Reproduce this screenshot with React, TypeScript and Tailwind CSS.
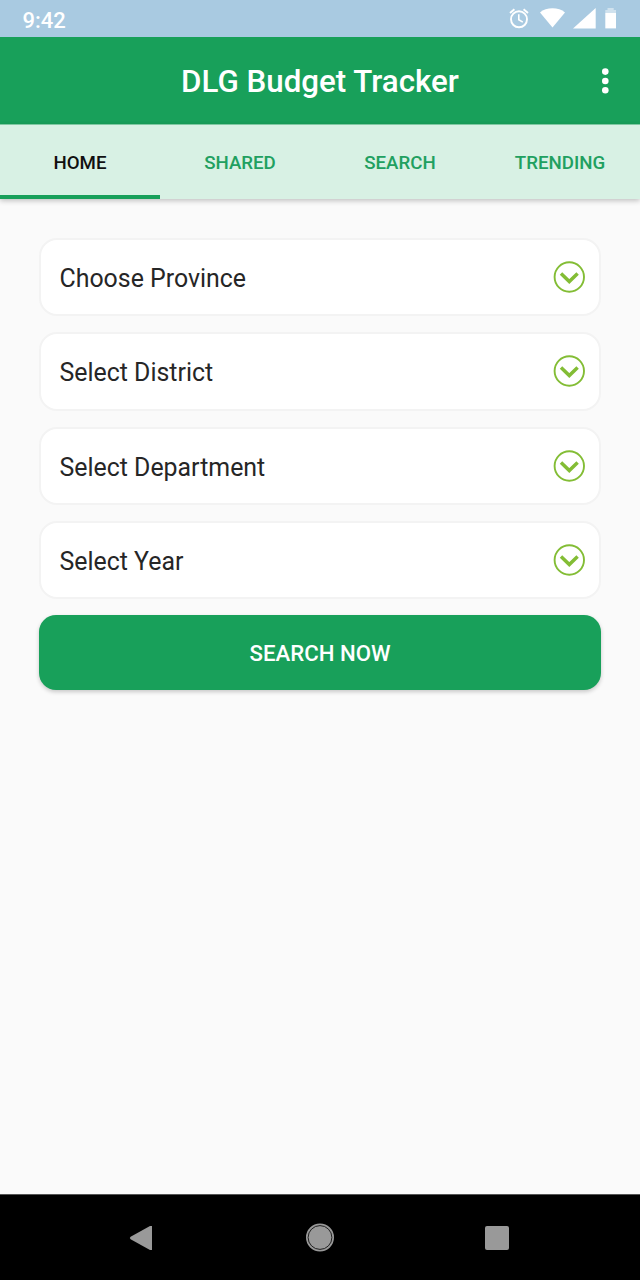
import React from "react";

const tabs = [
  { label: "HOME", active: true },
  { label: "SHARED", active: false },
  { label: "SEARCH", active: false },
  { label: "TRENDING", active: false },
];

const fields = ["Choose Province", "Select District", "Select Department", "Select Year"];

function StatusBar() {
  return (
    <div className="flex h-[37px] items-center justify-between bg-[#a9cae1] pr-[24px] pl-[22.500px] text-white">
      <span className="pt-[4px] text-[22px] leading-none font-medium">9:42</span>
      <svg width="110" height="24" viewBox="506 6 110 24" fill="currentColor" className="mb-[1px]">
        <g fill="none" stroke="currentColor" strokeWidth="1.9">
          <circle cx="519" cy="19.300" r="8" />
          <path d="M518.8 14.300v5.4l4 2.4" strokeWidth="1.6" />
          <path d="M510 12.900l4.4-3.7M528 12.900l-4.4-3.7" />
        </g>
        <path d="M540 12.4C543.2 9.8 547.7 8.3 552.5 8.3s9.300 1.500 12.500 4.100L552.500 27.600z" />
        <path d="M595.700 8v20.400h-22.700z" />
        <path d="M607.500 8h6.200v2h2.300v3h-10.700v-3h2.200z" opacity="0.45" />
        <path d="M605.300 13h10.700v15.400h-10.700z" />
      </svg>
    </div>
  );
}

function Header() {
  return (
    <header className="grid h-[87px] grid-cols-[70px_1fr_70px] items-center bg-[#18a05a] text-white">
      <span />
      <h1 className="pt-[2px] text-center text-[31.300px] leading-none font-medium whitespace-nowrap">
        DLG Budget Tracker
      </h1>
      <button className="flex justify-center" aria-label="More">
        <svg width="8" height="28" viewBox="0 0 8 28" fill="currentColor">
          <circle cx="4.300" cy="4.600" r="3.300" />
          <circle cx="4.300" cy="14" r="3.300" />
          <circle cx="4.300" cy="23.300" r="3.300" />
        </svg>
      </button>
    </header>
  );
}

function Chevron() {
  return (
    <svg width="32" height="32" viewBox="0 0 32 32" fill="none" stroke="#83bd35">
      <circle cx="16.300" cy="16" r="14.700" strokeWidth="1.900" />
      <path d="M8 12.500l8.300 8 8.300-8" strokeWidth="3.500" />
    </svg>
  );
}

export default function App() {
  return (
    <div className="flex h-[1280px] w-[640px] flex-col overflow-hidden bg-[#fafafa] font-['Roboto',sans-serif]">
      <StatusBar />
      <Header />
      <nav className="grid h-[75px] grid-cols-4 border-t border-[#7fc9a2] bg-[#d8f1e4] shadow-[0_2px_5px_rgba(0,0,0,0.22)]">
        {tabs.map((tab) => (
          <button
            key={tab.label}
            className={
              tab.active
                ? "border-b-[4px] border-[#18a05a] pt-[6px] text-[18.700px] font-medium text-[#101010]"
                : "border-b-[4px] border-transparent pt-[6px] text-[18.700px] font-medium text-[#21a060]"
            }
          >
            {tab.label}
          </button>
        ))}
      </nav>
      <main className="flex flex-1 flex-col gap-4 px-[39px] pt-[39px]">
        {fields.map((field) => (
          <button
            key={field}
            className="flex h-[78.250px] items-center justify-between rounded-[18px] border-2 border-[#f3f3f3] bg-white pr-[14px] pl-[18.500px] text-[24.900px] text-[#262626]"
          >
            <span className="pt-[3.500px]">{field}</span>
            <Chevron />
          </button>
        ))}
        <button className="h-[75px] rounded-[17px] bg-[#18a05a] pt-[2px] text-[22.200px] font-medium text-white shadow-[0_2px_4px_rgba(0,0,0,0.2)]">
          SEARCH NOW
        </button>
      </main>
      <footer className="grid h-[86px] grid-cols-[282px_76px_282px] items-center border-t border-[#555] bg-black">
        <svg width="24" height="26" viewBox="0 0 24 26" fill="#999" className="ml-[129px]">
          <path d="M23 1v24h-2L1.600 14.200q-1.600-1.200 0-2.400L21 1z" />
        </svg>
        <svg width="30" height="30" viewBox="0 0 30 30" className="mx-auto">
          <circle cx="15" cy="14.500" r="13.300" fill="#999" stroke="#999" strokeWidth="1.400" />
          <circle cx="15" cy="14.500" r="11.900" fill="#999" stroke="#202020" strokeWidth="1" />
        </svg>
        <span className="ml-[126.500px] h-[24px] w-[24px] rounded-[2px] bg-[#999]" />
      </footer>
    </div>
  );
}
